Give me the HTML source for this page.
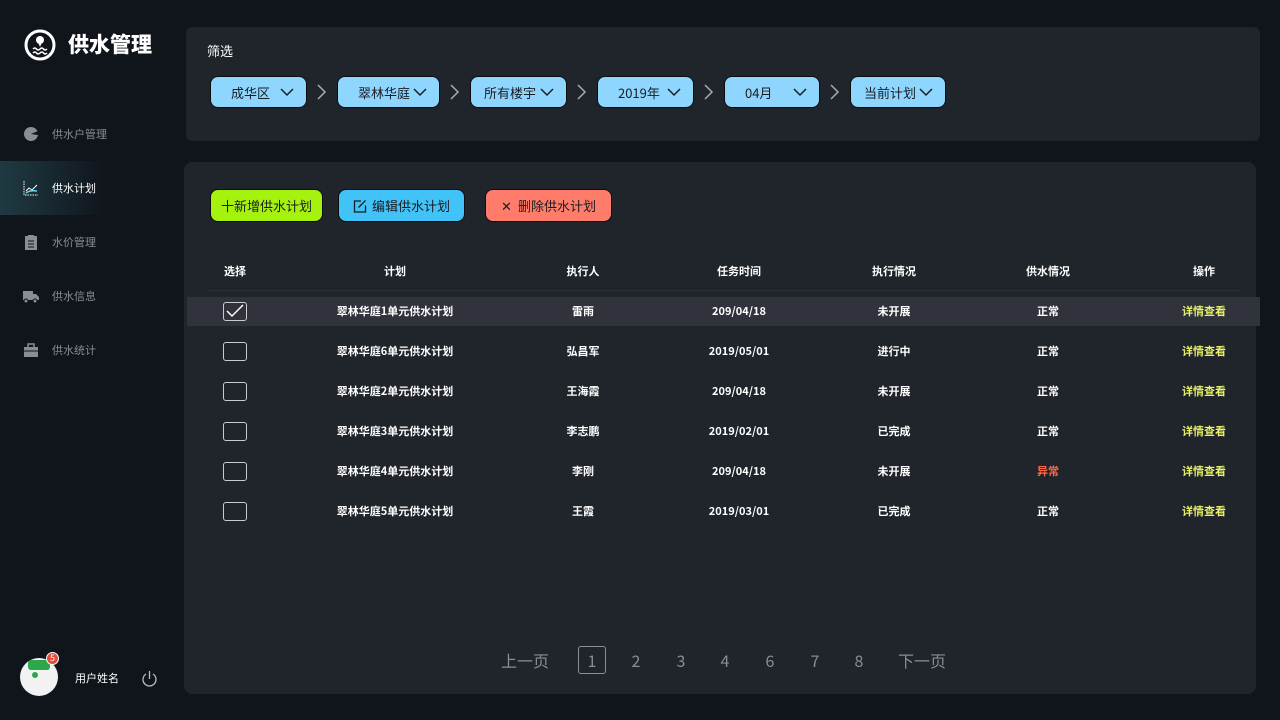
<!DOCTYPE html>
<html><head><meta charset="utf-8"><style>
*{margin:0;padding:0;box-sizing:border-box}
body{width:1280px;height:720px;background:#10141b;font-family:"Noto Sans CJK SC","Liberation Sans",sans-serif;color:#fff;position:relative;overflow:hidden}
.abs{position:absolute}
.panel{position:absolute;background:#20242b;border-radius:6px}
.nav{position:absolute;left:0;width:180px;height:54px;font-size:11px;color:#8a8d92;display:flex;align-items:center}
.nav .ic{position:absolute;left:23px;top:19px;width:16px;height:16px}
.nav span{position:absolute;left:52px}
.pill{position:absolute;top:76px;height:32px;background:#8fd6ff;border:1px solid #0b0d10;border-radius:8px;color:#1a1d22;font-size:13px;display:flex;align-items:center;padding-left:20px}
.pill svg{position:absolute;right:12px;top:11px}
.arr{position:absolute;top:84px}
.btn{position:absolute;top:189px;height:33px;border-radius:8px;border:1px solid #0b0d10;color:#1a1d22;font-size:13px;display:flex;align-items:center;justify-content:center}
.th{position:absolute;top:263px;font-size:11px;font-weight:bold;transform:translateX(-50%);white-space:nowrap}
.td{position:absolute;font-size:11px;font-weight:bold;transform:translateX(-50%);white-space:nowrap}
.cb{position:absolute;left:223px;width:24px;height:19px;border:1.5px solid #c9cbce;border-radius:3px}
.pg{position:absolute;top:648px;font-size:16px;color:#8a8d92;transform:translateX(-50%)}
</style></head><body>
<svg class="abs" style="left:24px;top:28px" width="32" height="34" viewBox="0 0 32 34"><circle cx="16" cy="17" r="14" fill="none" stroke="#fff" stroke-width="3"/><circle cx="16" cy="12" r="4" fill="#fff"/><path d="M14 14 L16 19 L18 14Z" fill="#fff"/><path d="M9 21q2-2 3.5 0t3.5 0 3.5 0 3.5 0M9 25q2-2 3.5 0t3.5 0 3.5 0 3.5 0" fill="none" stroke="#fff" stroke-width="1.5"/></svg>
<div class="abs" style="left:68px;top:29px;font-size:21px;font-weight:900;line-height:30px">供水管理</div>
<div class="nav" style="top:107px"><svg class="ic" viewBox="0 0 16 16"><circle cx="8" cy="8" r="7" fill="#8a8d92"/><path d="M8 8L15 5L15 9Z" fill="#10141b"/></svg><span>供水户管理</span></div>
<div class="nav" style="top:161px;background:linear-gradient(90deg,#1f3a43,#10141b 60%);color:#fff"><svg class="ic" viewBox="0 0 16 16"><path d="M1 1v14h14" stroke="#fff" fill="none" stroke-dasharray="1.5 1"/><path d="M3 11l3-3 3 2 5-5" stroke="#fff" fill="none"/><path d="M3 13q4-3 11-2" stroke="#6cd6ff" fill="none" stroke-width="1.5"/></svg><span>供水计划</span></div>
<div class="nav" style="top:215px"><svg class="ic" viewBox="0 0 16 16"><rect x="2" y="2" width="12" height="14" fill="#8a8d92"/><rect x="5" y="1" width="6" height="3" fill="#8a8d92"/><path d="M5 7h6M5 10h6M5 13h6" stroke="#10141b"/></svg><span>水价管理</span></div>
<div class="nav" style="top:269px"><svg class="ic" viewBox="0 0 16 16"><rect x="0" y="3" width="10" height="9" fill="#8a8d92"/><path d="M10 6h3l3 3v3h-6z" fill="#8a8d92"/><circle cx="3" cy="13" r="2" fill="#8a8d92" stroke="#10141b"/><circle cx="12" cy="13" r="2" fill="#8a8d92" stroke="#10141b"/></svg><span>供水信息</span></div>
<div class="nav" style="top:323px"><svg class="ic" viewBox="0 0 16 16"><rect x="1" y="5" width="14" height="10" fill="#8a8d92"/><rect x="5" y="2" width="6" height="4" fill="none" stroke="#8a8d92" stroke-width="1.5"/><path d="M1 9h14" stroke="#10141b"/></svg><span>供水统计</span></div>
<div class="abs" style="left:20px;top:658px;width:38px;height:38px;border-radius:50%;background:#f2f2f2;overflow:hidden"><div style="position:absolute;left:8px;top:2px;width:22px;height:10px;background:#2ca84a;border-radius:3px"></div><div style="position:absolute;left:12px;top:14px;width:6px;height:6px;background:#2ca84a;border-radius:50%"></div></div>
<div class="abs" style="left:46px;top:652px;width:13px;height:13px;border-radius:50%;background:#e84a3a;border:1.5px solid #fff;font-size:9px;text-align:center;line-height:10px">5</div>
<div class="abs" style="left:75px;top:670px;font-size:11px">用户姓名</div>
<svg class="abs" style="left:141px;top:670px" width="17" height="18" viewBox="0 0 17 18"><path d="M5 4a6.5 6.5 0 1 0 7 0" fill="none" stroke="#bbb" stroke-width="1.3"/><path d="M8.5 1v8" stroke="#bbb" stroke-width="1.3"/></svg>
<div class="panel" style="left:186px;top:27px;width:1074px;height:114px"></div>
<div class="abs" style="left:207px;top:41px;font-size:13px">筛选</div>
<div class="pill" style="left:210px;width:97px">成华区<svg width="14" height="9"><path d="M1 1l6 6 6-6" stroke="#1a1d22" fill="none" stroke-width="1.5"/></svg></div>
<div class="pill" style="left:337px;width:103px">翠林华庭<svg width="14" height="9"><path d="M1 1l6 6 6-6" stroke="#1a1d22" fill="none" stroke-width="1.5"/></svg></div>
<div class="pill" style="left:470px;width:97px;padding-left:13px">所有楼宇<svg width="14" height="9"><path d="M1 1l6 6 6-6" stroke="#1a1d22" fill="none" stroke-width="1.5"/></svg></div>
<div class="pill" style="left:597px;width:97px">2019年<svg width="14" height="9"><path d="M1 1l6 6 6-6" stroke="#1a1d22" fill="none" stroke-width="1.5"/></svg></div>
<div class="pill" style="left:724px;width:96px">04月<svg width="14" height="9"><path d="M1 1l6 6 6-6" stroke="#1a1d22" fill="none" stroke-width="1.5"/></svg></div>
<div class="pill" style="left:850px;width:96px;padding-left:13px">当前计划<svg width="14" height="9"><path d="M1 1l6 6 6-6" stroke="#1a1d22" fill="none" stroke-width="1.5"/></svg></div>
<svg class="arr" style="left:317px" width="10" height="16"><path d="M1 1l7 7-7 7" stroke="#aaa" fill="none" stroke-width="1.5"/></svg>
<svg class="arr" style="left:450px" width="10" height="16"><path d="M1 1l7 7-7 7" stroke="#aaa" fill="none" stroke-width="1.5"/></svg>
<svg class="arr" style="left:577px" width="10" height="16"><path d="M1 1l7 7-7 7" stroke="#aaa" fill="none" stroke-width="1.5"/></svg>
<svg class="arr" style="left:704px" width="10" height="16"><path d="M1 1l7 7-7 7" stroke="#aaa" fill="none" stroke-width="1.5"/></svg>
<svg class="arr" style="left:830px" width="10" height="16"><path d="M1 1l7 7-7 7" stroke="#aaa" fill="none" stroke-width="1.5"/></svg>
<div class="panel" style="left:184px;top:162px;width:1072px;height:532px;border-radius:8px"></div>
<div class="btn" style="left:210px;width:113px;background:#a6f20f">十新增供水计划</div>
<div class="btn" style="left:338px;width:127px;background:#41c3f7"><svg width="14" height="14" style="margin-right:5px"><path d="M8 2H1.5v11h11V6.5M5.5 8.5l7-7" stroke="#1a1d22" fill="none" stroke-width="1.3"/></svg>编辑供水计划</div>
<div class="btn" style="left:485px;width:127px;background:#ff7c6a"><span style="margin-right:6px">✕</span>删除供水计划</div>
<div class="th" style="left:235px">选择</div><div class="th" style="left:395px">计划</div><div class="th" style="left:583px">执行人</div><div class="th" style="left:739px">任务时间</div><div class="th" style="left:894px">执行情况</div><div class="th" style="left:1048px">供水情况</div><div class="th" style="left:1204px">操作</div>
<div class="abs" style="left:208px;top:290px;width:1032px;height:1px;background:#2a2e35"></div>
<div class="abs" style="left:187px;top:297px;width:1073px;height:29px;background:#30333b"></div>
<div class="cb" style="top:302px"><svg width="22" height="17" style="position:absolute;left:0;top:0"><path d="M3 8l5 5 11-11" stroke="#fff" fill="none" stroke-width="1.5"/></svg></div>
<div class="cb" style="top:342px"></div><div class="cb" style="top:382px"></div><div class="cb" style="top:422px"></div><div class="cb" style="top:462px"></div><div class="cb" style="top:502px"></div>
<div class="td" style="left:395px;top:303px">翠林华庭1单元供水计划</div><div class="td" style="left:583px;top:303px">雷雨</div><div class="td" style="left:739px;top:303px">209/04/18</div><div class="td" style="left:894px;top:303px">未开展</div><div class="td" style="left:1048px;top:303px">正常</div><div class="td" style="left:1204px;top:303px;color:#e6f06a">详情查看</div>
<div class="td" style="left:395px;top:343px">翠林华庭6单元供水计划</div><div class="td" style="left:583px;top:343px">弘昌军</div><div class="td" style="left:739px;top:343px">2019/05/01</div><div class="td" style="left:894px;top:343px">进行中</div><div class="td" style="left:1048px;top:343px">正常</div><div class="td" style="left:1204px;top:343px;color:#e6f06a">详情查看</div>
<div class="td" style="left:395px;top:383px">翠林华庭2单元供水计划</div><div class="td" style="left:583px;top:383px">王海霞</div><div class="td" style="left:739px;top:383px">209/04/18</div><div class="td" style="left:894px;top:383px">未开展</div><div class="td" style="left:1048px;top:383px">正常</div><div class="td" style="left:1204px;top:383px;color:#e6f06a">详情查看</div>
<div class="td" style="left:395px;top:423px">翠林华庭3单元供水计划</div><div class="td" style="left:583px;top:423px">李志鹏</div><div class="td" style="left:739px;top:423px">2019/02/01</div><div class="td" style="left:894px;top:423px">已完成</div><div class="td" style="left:1048px;top:423px">正常</div><div class="td" style="left:1204px;top:423px;color:#e6f06a">详情查看</div>
<div class="td" style="left:395px;top:463px">翠林华庭4单元供水计划</div><div class="td" style="left:583px;top:463px">李刚</div><div class="td" style="left:739px;top:463px">209/04/18</div><div class="td" style="left:894px;top:463px">未开展</div><div class="td" style="left:1048px;top:463px;color:#ff6a4a">异常</div><div class="td" style="left:1204px;top:463px;color:#e6f06a">详情查看</div>
<div class="td" style="left:395px;top:503px">翠林华庭5单元供水计划</div><div class="td" style="left:583px;top:503px">王霞</div><div class="td" style="left:739px;top:503px">2019/03/01</div><div class="td" style="left:894px;top:503px">已完成</div><div class="td" style="left:1048px;top:503px">正常</div><div class="td" style="left:1204px;top:503px;color:#e6f06a">详情查看</div>
<div class="pg" style="left:525px">上一页</div>
<div class="abs" style="left:578px;top:646px;width:28px;height:28px;border:1.5px solid #8a8d92;border-radius:3px"></div>
<div class="pg" style="left:592px">1</div><div class="pg" style="left:636px">2</div><div class="pg" style="left:681px">3</div><div class="pg" style="left:725px">4</div><div class="pg" style="left:770px">6</div><div class="pg" style="left:815px">7</div><div class="pg" style="left:859px">8</div>
<div class="pg" style="left:922px">下一页</div>
</body></html>
